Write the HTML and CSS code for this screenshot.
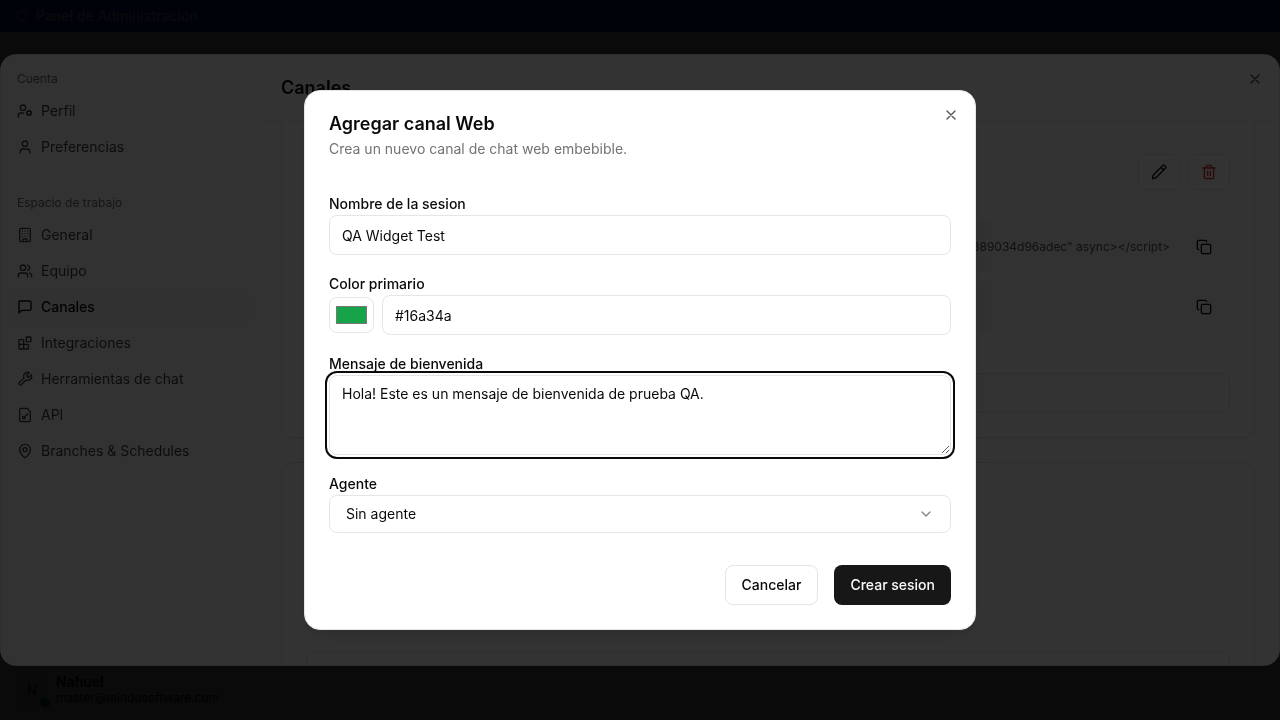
FILE: index.html
```html
<!DOCTYPE html>
<html lang="es">
<head>
  <meta charset="UTF-8">
  <meta name="viewport" content="width=device-width, initial-scale=1">
  <title>Canales</title>
  <link rel="stylesheet" href="styles.css">
</head>
<body>

<div class="app">
  <header class="admin-bar">
    <svg class="icon small" viewBox="0 0 24 24"><path d="M20 13c0 5-3.5 7.5-8 9-4.5-1.5-8-4-8-9V5l8-3 8 3z"/></svg>
    <span>Panel de Administración</span>
  </header>
  <footer class="account">
    <div class="avatar">N<span class="status"></span></div>
    <div>
      <div class="account-name">Nahuel</div>
      <div class="account-mail">master@mindosoftware.com</div>
    </div>
  </footer>
</div>

<!-- settings -->
<div class="overlay">
  <section class="settings" role="dialog" aria-label="Configuración">
    <nav class="sidebar">
      <div class="group">
        <div class="group-label">Cuenta</div>
        <a class="item" href="#perfil">
          <svg class="icon" viewBox="0 0 24 24"><circle cx="18" cy="15" r="3"/><circle cx="9" cy="7" r="4"/><path d="M10 15H6a4 4 0 0 0-4 4v2M21.7 16.4l-.9-.3M15.2 13.9l-.9-.3M16.6 18.7l.3-.9M19.1 12.2l.3-.9M19.6 18.7l-.4-1M16.8 12.3l-.4-1M14.3 16.6l1-.4M20.7 13.8l1-.4"/></svg>
          Perfil
        </a>
        <a class="item" href="#preferencias">
          <svg class="icon" viewBox="0 0 24 24"><path d="M19 21v-2a4 4 0 0 0-4-4H9a4 4 0 0 0-4 4v2"/><circle cx="12" cy="7" r="4"/></svg>
          Preferencias
        </a>
      </div>
      <div class="group">
        <div class="group-label">Espacio de trabajo</div>
        <a class="item" href="#general">
          <svg class="icon" viewBox="0 0 24 24"><rect x="4" y="2" width="16" height="20" rx="2"/><path d="M9 22v-4h6v4M8 6h.01M16 6h.01M12 6h.01M12 10h.01M12 14h.01M16 10h.01M16 14h.01M8 10h.01M8 14h.01"/></svg>
          General
        </a>
        <a class="item" href="#equipo">
          <svg class="icon" viewBox="0 0 24 24"><path d="M16 21v-2a4 4 0 0 0-4-4H6a4 4 0 0 0-4 4v2"/><circle cx="9" cy="7" r="4"/><path d="M22 21v-2a4 4 0 0 0-3-3.87M16 3.13a4 4 0 0 1 0 7.75"/></svg>
          Equipo
        </a>
        <a class="item active" href="#canales">
          <svg class="icon" viewBox="0 0 24 24"><path d="M21 15a2 2 0 0 1-2 2H7l-4 4V5a2 2 0 0 1 2-2h14a2 2 0 0 1 2 2z"/></svg>
          Canales
        </a>
        <a class="item" href="#integraciones">
          <svg class="icon" viewBox="0 0 24 24"><rect x="14" y="3" width="7" height="7" rx="1"/><path d="M10 21V8a1 1 0 0 0-1-1H4a1 1 0 0 0-1 1v12a1 1 0 0 0 1 1h12a1 1 0 0 0 1-1v-5a1 1 0 0 0-1-1H3"/></svg>
          Integraciones
        </a>
        <a class="item" href="#herramientas">
          <svg class="icon" viewBox="0 0 24 24"><path d="M14.7 6.3a1 1 0 0 0 0 1.4l1.6 1.6a1 1 0 0 0 1.4 0l3.77-3.77a6 6 0 0 1-7.94 7.94l-6.91 6.91a2.12 2.12 0 0 1-3-3l6.91-6.91a6 6 0 0 1 7.94-7.94l-3.76 3.76z"/></svg>
          Herramientas de chat
        </a>
        <a class="item" href="#api">
          <svg class="icon" viewBox="0 0 24 24"><path d="M15 2H6a2 2 0 0 0-2 2v16a2 2 0 0 0 2 2h12a2 2 0 0 0 2-2V7z"/><circle cx="10" cy="16" r="2"/><path d="m16 10-4.5 4.5M15 11l1 1"/></svg>
          API
        </a>
        <a class="item" href="#branches">
          <svg class="icon" viewBox="0 0 24 24"><path d="M20 10c0 5-5.5 10.2-7.4 11.8a1 1 0 0 1-1.2 0C9.5 20.2 4 15 4 10a8 8 0 0 1 16 0"/><circle cx="12" cy="10" r="3"/></svg>
          Branches &amp; Schedules
        </a>
      </div>
    </nav>

    <div class="main">
      <header class="main-header">
        <h1>Canales</h1>
      </header>
      <div class="main-body">
        <div class="card card-first">
          <div class="card-actions">
            <button class="icon-button" type="button" aria-label="Editar">
              <svg class="icon" viewBox="0 0 24 24"><path d="M21.17 6.81a1 1 0 0 0-3.98-3.98L3.84 16.17a2 2 0 0 0-.5.83l-1.32 4.35a.5.5 0 0 0 .62.62l4.35-1.32a2 2 0 0 0 .83-.5zM15 5l4 4"/></svg>
            </button>
            <button class="icon-button danger" type="button" aria-label="Eliminar">
              <svg class="icon" viewBox="0 0 24 24"><path d="M3 6h18M19 6v14a2 2 0 0 1-2 2H7a2 2 0 0 1-2-2V6M8 6V4a2 2 0 0 1 2-2h4a2 2 0 0 1 2 2v2M10 11v6M14 11v6"/></svg>
            </button>
          </div>
          <div class="snippet">
            <code>389034d96adec" async&gt;&lt;/script&gt;</code>
            <button class="copy" type="button" aria-label="Copiar código">
              <svg class="icon" viewBox="0 0 24 24"><rect x="8" y="8" width="14" height="14" rx="2"/><path d="M4 16c-1.1 0-2-.9-2-2V4c0-1.1.9-2 2-2h10c1.1 0 2 .9 2 2"/></svg>
            </button>
          </div>
          <div class="snippet">
            <button class="copy" type="button" aria-label="Copiar enlace">
              <svg class="icon" viewBox="0 0 24 24"><rect x="8" y="8" width="14" height="14" rx="2"/><path d="M4 16c-1.1 0-2-.9-2-2V4c0-1.1.9-2 2-2h10c1.1 0 2 .9 2 2"/></svg>
            </button>
          </div>
          <input class="input channel-input" type="text" aria-label="Canal">
        </div>
        <div class="card card-second">
          <div class="inner-card"></div>
        </div>
      </div>
    </div>

    <button class="close" type="button" aria-label="Cerrar">
      <svg class="icon" viewBox="0 0 24 24"><path d="M18 6 6 18M6 6l12 12"/></svg>
    </button>
  </section>
</div>

<!-- new channel -->
<div class="overlay">
  <form class="modal" role="dialog" aria-labelledby="modal-title">
    <h2 id="modal-title">Agregar canal Web</h2>
    <p class="description">Crea un nuevo canal de chat web embebible.</p>

    <div class="fields">
      <div class="field">
        <label for="nombre">Nombre de la sesion</label>
        <input class="input" type="text" id="nombre" value="QA Widget Test">
      </div>
      <div class="field">
        <label for="color-hex">Color primario</label>
        <div class="color-row">
          <input class="swatch" type="color" value="#16a34a" aria-label="Elegir color">
          <input class="input" type="text" id="color-hex" value="#16a34a">
        </div>
      </div>
      <div class="field">
        <label for="mensaje">Mensaje de bienvenida</label>
        <textarea class="input message" id="mensaje">Hola! Este es un mensaje de bienvenida de prueba QA.</textarea>
      </div>
      <div class="field">
        <label for="agente">Agente</label>
        <div class="select-wrap">
          <select id="agente">
            <option>Sin agente</option>
          </select>
          <svg class="icon chevron" viewBox="0 0 24 24"><path d="m6 9 6 6 6-6"/></svg>
        </div>
      </div>
    </div>

    <div class="actions">
      <button class="button" type="button">Cancelar</button>
      <button class="button primary" type="submit">Crear sesion</button>
    </div>

    <button class="close" type="button" aria-label="Cerrar">
      <svg class="icon" viewBox="0 0 24 24"><path d="M18 6 6 18M6 6l12 12"/></svg>
    </button>
  </form>
</div>

</body>
</html>
```
FILE: styles.css
```css
* {
  box-sizing: border-box;
}
body {
  margin: 0;
  font-family: Inter, "Liberation Sans", sans-serif;
  font-size: 14px;
  line-height: 20px;
  color: #0a0a0a;
}
h1, h2, p {
  margin: 0;
}
button, input, textarea, select {
  font: inherit;
  color: inherit;
}
button {
  cursor: pointer;
}
.icon {
  display: block;
  flex: none;
  width: 16px;
  height: 16px;
  fill: none;
  stroke: currentColor;
  stroke-width: 2;
  stroke-linecap: round;
  stroke-linejoin: round;
}
.icon.small {
  width: 12px;
  height: 12px;
}

/* page behind the dialogs */
.app {
  display: flex;
  flex-direction: column;
  justify-content: space-between;
  height: 100vh;
  background: #fff;
}
.admin-bar {
  display: flex;
  align-items: center;
  gap: 8px;
  height: 32px;
  padding: 0 16px;
  background: #0b3bff;
  color: #dbeafe;
  font-weight: 500;
}
.account {
  display: flex;
  align-items: center;
  gap: 8px;
  padding: 14px 16px;
}
.avatar {
  position: relative;
  width: 32px;
  height: 32px;
  border-radius: 8px;
  background: #f5f5f5;
  color: #b91c1c;
  font-weight: 600;
  line-height: 32px;
  text-align: center;
}
.status {
  position: absolute;
  right: -2px;
  bottom: -2px;
  width: 10px;
  height: 10px;
  border-radius: 50%;
  background: #16a34a;
}
.account-name {
  font-weight: 600;
  line-height: 16px;
}
.account-mail {
  font-size: 12px;
  line-height: 16px;
}

.overlay {
  position: fixed;
  inset: 0;
  display: grid;
  align-items: center;
  justify-items: center;
  background: rgba(0, 0, 0, 0.8);
}
.close {
  position: absolute;
  top: 16px;
  right: 16px;
  padding: 0;
  border: 0;
  background: none;
  opacity: 0.7;
}

/* settings dialog */
.settings {
  position: relative;
  display: flex;
  width: 100%;
  height: 85vh;
  border: 1px solid #e5e5e5;
  border-radius: 16px;
  background: #fff;
  overflow: hidden;
}
.sidebar {
  display: flex;
  flex-direction: column;
  gap: 8px;
  flex: none;
  width: 256px;
  background: #fafafa;
}
.group {
  display: flex;
  flex-direction: column;
  padding: 8px;
}
.group-label {
  padding: 0 8px;
  font-size: 12px;
  line-height: 32px;
  color: #6b6b6b;
}
.item {
  display: flex;
  align-items: center;
  gap: 8px;
  height: 32px;
  padding: 0 8px;
  border-radius: 8px;
  color: #3f3f46;
  text-decoration: none;
}
.item + .item {
  margin-top: 4px;
}
.item.active {
  background: #f4f4f5;
  color: #0a0a0a;
  font-weight: 500;
}
.main {
  display: flex;
  flex-direction: column;
  flex: 1;
  min-width: 0;
}
.main-header {
  padding: 19px 24px;
  border-bottom: 1px solid #f0f0f0;
}
.main-header h1 {
  font-size: 18px;
  font-weight: 600;
  line-height: 28px;
}
.main-body {
  display: flex;
  flex-direction: column;
  gap: 24px;
  flex: 1;
  min-height: 0;
  padding: 0 24px;
  overflow: hidden;
}
.card {
  flex: none;
  padding: 32px 24px 24px;
  border: 1px solid #e5e5e5;
  border-radius: 12px;
}
.card-first {
  border-top: 0;
  border-radius: 0 0 12px 12px;
}
.card-actions {
  display: flex;
  justify-content: flex-end;
  gap: 8px;
  margin-bottom: 31px;
}
.icon-button {
  display: grid;
  place-items: center;
  width: 42px;
  height: 36px;
  padding: 0;
  border: 1px solid #e5e5e5;
  border-radius: 8px;
  background: none;
}
.danger {
  color: #dc2626;
}
.snippet {
  display: flex;
  align-items: center;
  justify-content: flex-end;
  gap: 20px;
  height: 52px;
  margin-bottom: 8px;
  padding: 0 12px;
  border-radius: 8px;
  background: #f7f7f7;
}
.snippet code {
  font-family: inherit;
  font-size: 12px;
  color: #525252;
}
.copy {
  display: grid;
  place-items: center;
  width: 28px;
  height: 36px;
  padding: 0;
  border: 0;
  background: none;
}
.channel-input {
  margin-top: 40px;
}
.card-second {
  padding-top: 188px;
}
.inner-card {
  height: 80px;
  border: 1px solid #e5e5e5;
  border-radius: 8px;
}

/* new channel dialog */
.modal {
  position: relative;
  width: 100%;
  max-width: 672px;
  padding: 24px;
  border: 1px solid #e5e5e5;
  border-radius: 16px;
  background: #fff;
  box-shadow: 0 10px 15px -3px rgba(0, 0, 0, 0.1);
}
.modal h2 {
  font-size: 18px;
  font-weight: 600;
  line-height: 18px;
}
.description {
  margin-top: 6px;
  color: #737373;
}
.fields {
  display: flex;
  flex-direction: column;
  gap: 16px;
  padding: 32px 0;
}
.field label {
  display: block;
  padding-top: 2px;
  font-weight: 500;
  line-height: 22px;
}
.input {
  display: block;
  width: 100%;
  height: 40px;
  padding: 8px 12px;
  border: 1px solid #e5e5e5;
  border-radius: 8px;
  background: #fff;
}
.color-row {
  display: flex;
  align-items: center;
  gap: 8px;
}
.swatch {
  flex: none;
  width: 45px;
  height: 36px;
  padding: 4px;
  border: 1px solid #e5e5e5;
  border-radius: 8px;
  background: #fff;
}
.message {
  height: 80px;
  outline: 2px solid #0a0a0a;
  outline-offset: 2px;
}
.select-wrap {
  position: relative;
}
.select-wrap select {
  display: block;
  width: 100%;
  height: 38px;
  padding: 0 16px;
  border: 1px solid #e5e5e5;
  border-radius: 8px;
  background: #fff;
  appearance: none;
}
.chevron {
  position: absolute;
  top: 11px;
  right: 17px;
  color: #858585;
  pointer-events: none;
}
.actions {
  display: flex;
  justify-content: flex-end;
  gap: 16px;
}
.button {
  height: 40px;
  padding: 0 16px;
  border: 1px solid #e5e5e5;
  border-radius: 8px;
  background: #fff;
  font-weight: 500;
}
.primary {
  border: 0;
  background: #171717;
  color: #fafafa;
}
```
